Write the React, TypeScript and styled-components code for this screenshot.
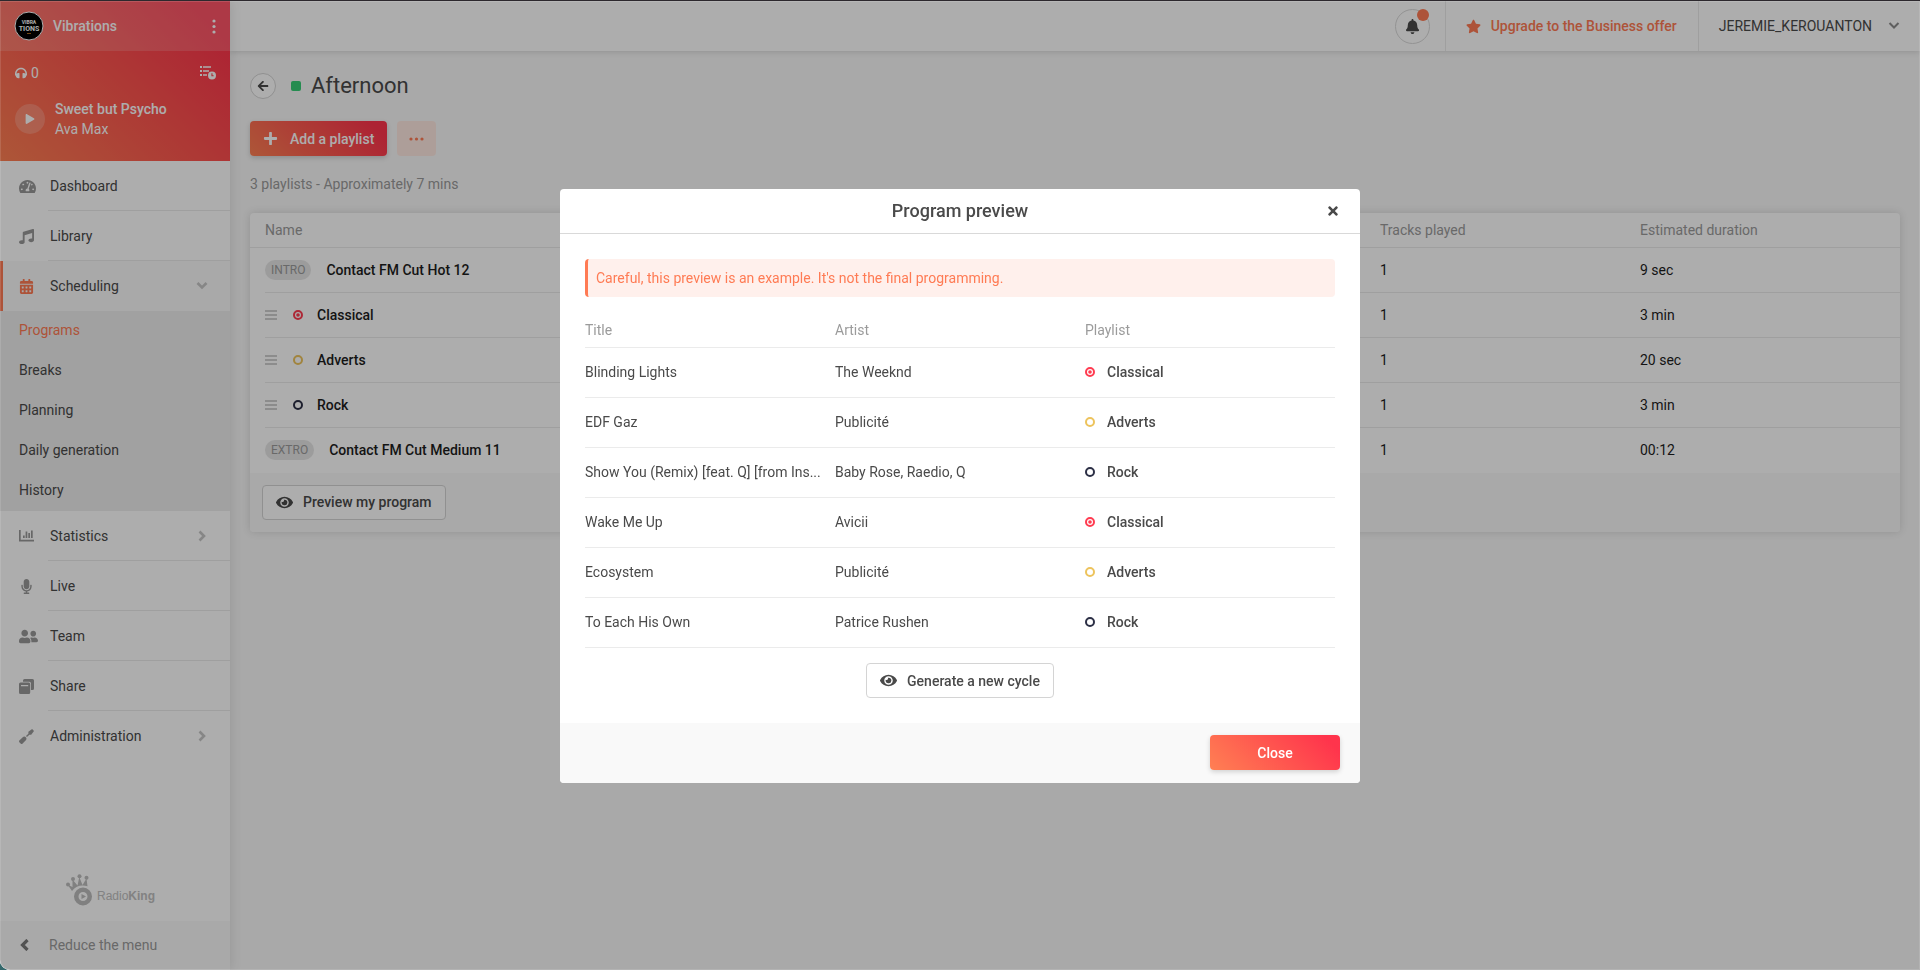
import React from "react";
import styled, { createGlobalStyle, css } from "styled-components";
import {
  FaArrowLeft,
  FaBell,
  FaCalendarAlt,
  FaEye,
  FaHeadphones,
  FaMicrophone,
  FaMusic,
  FaPlay,
  FaPlus,
  FaScrewdriver,
  FaStar,
  FaTachometerAlt,
  FaTimes,
  FaUserFriends,
} from "react-icons/fa";

const colors = {
  accent: "#ff7b54",
  text: "#4a4a4a",
  dark: "#1d1d1d",
  muted: "#9b9b9b",
  line: "#ebebeb",
  soft: "#f9f9f9",
  red: "#ff3b50",
  yellow: "#edc35c",
  navy: "#2c2f45",
};
const brandGradient = "linear-gradient(45deg, #ff8053 0%, #ff344c 90%)";

const GlobalStyle = createGlobalStyle`
  *, *::before, *::after { box-sizing: border-box; }
  body {
    margin: 0;
    background: #34686b;
    color: ${colors.text};
    font: 400 14px/20px Roboto, "Liberation Sans", sans-serif;
  }
  button { font: inherit; color: inherit; cursor: pointer; margin: 0; padding: 0; border: 0; background: none; }
  a { color: inherit; text-decoration: none; }
  h1, h2, p, ul { margin: 0; padding: 0; font-weight: 400; }
  ul { list-style: none; }
  svg { display: block; flex: none; }
  table { border-collapse: collapse; border-spacing: 0; table-layout: fixed; width: 100%; }
  th { font-weight: 400; text-align: left; color: ${colors.muted}; }
  td, th { padding: 0; }
`;

/* ---------- Page frame ---------- */

const Page = styled.div`
  display: flex;
  min-height: 100vh;
  border-top: 1px solid #2c282d;
  border-bottom-left-radius: 10px;
  overflow: hidden;
  background: ${colors.soft};
`;

/* ---------- Sidebar ---------- */

const Sidebar = styled.aside`
  display: flex;
  flex-direction: column;
  flex: none;
  width: 230px;
  background: #fff;
  box-shadow: 0 0 12px rgba(0, 0, 0, 0.12);
  z-index: 2;
`;

const Station = styled.div`
  background: ${brandGradient};
  color: #fff;
`;

const StationBar = styled.div`
  display: flex;
  align-items: center;
  gap: 9px;
  height: 50px;
  padding: 0 14px;
  background: rgba(255, 255, 255, 0.16);
  font-weight: 500;
`;

const StationName = styled.span`
  flex: 1;
`;

const DotsButton = styled.button`
  display: grid;
  place-items: center;
  width: 4px;
  height: 20px;
`;

const Player = styled.div`
  height: 110px;
  padding: 12px 14px 0 15px;
`;

const PlayerTop = styled.div`
  display: flex;
  align-items: center;
  justify-content: space-between;
`;

const Listeners = styled.span`
  display: flex;
  align-items: center;
  gap: 4px;
`;

const NowPlaying = styled.div`
  display: flex;
  align-items: center;
  gap: 10px;
  margin-top: 16px;
`;

const PlayButton = styled.button`
  display: grid;
  place-items: center;
  width: 30px;
  height: 30px;
  border-radius: 50%;
  background: rgba(255, 255, 255, 0.2);
`;

const TrackTitle = styled.p`
  font-weight: 500;
`;

const MenuRow = styled.a<{ $active?: boolean; $last?: boolean }>`
  display: flex;
  align-items: stretch;
  height: 50px;
  padding-left: ${(p) => (p.$active ? 16 : 19)}px;
  border-left: ${(p) => (p.$active ? `3px solid ${colors.accent}` : "0")};
  background: ${(p) => (p.$active ? colors.soft : "transparent")};
  --divider: ${(p) => (p.$active || p.$last ? "transparent" : colors.line)};
`;

const MenuIcon = styled.span<{ $active?: boolean }>`
  display: flex;
  align-items: center;
  width: 29px;
  color: ${(p) => (p.$active ? colors.accent : "#999")};
`;

const MenuLabel = styled.span`
  display: flex;
  flex: 1;
  align-items: center;
  justify-content: space-between;
  padding: 0 22px 0 2px;
  border-bottom: 1px solid var(--divider);

  svg {
    color: #c6c6c6;
  }
`;

const SubMenu = styled.ul`
  background: #ededed;
`;

const SubItem = styled.a<{ $active?: boolean }>`
  display: block;
  padding: 9px 19px 11px;
  color: ${(p) => (p.$active ? colors.accent : colors.text)};
`;

const Brand = styled.div`
  display: flex;
  align-items: flex-end;
  flex: 1;
  min-height: 64px;
  padding: 0 66px 15px;
`;

const BrandName = styled.span`
  margin-left: 4px;
  color: #c0c0c0;
  font: 400 12px/20px "Liberation Sans", sans-serif;

  b {
    font-weight: 700;
  }
`;

const ReduceButton = styled.button`
  display: flex;
  align-items: center;
  gap: 18px;
  height: 49px;
  padding-left: 19px;
  background: ${colors.soft};
  border-bottom: 1px solid #fff;
  color: ${colors.muted};

  svg {
    color: #7a7a7a;
  }
`;

/* ---------- Top bar ---------- */

const Main = styled.main`
  flex: 1;
  min-width: 0;
`;

const TopBar = styled.header`
  display: flex;
  justify-content: flex-end;
  height: 50px;
  background: #fff;
  box-shadow: 0 1px 6px rgba(0, 0, 0, 0.14);
`;

const TopSection = styled.div`
  display: flex;
  align-items: center;
  border-left: 1px solid ${colors.line};
`;

const BellWrap = styled.div`
  display: flex;
  align-items: center;
  padding-right: 15px;
`;

const BellButton = styled.button`
  position: relative;
  display: grid;
  place-items: center;
  width: 35px;
  height: 35px;
  border: 1px solid #d9d9d9;
  border-radius: 50%;

  &::after {
    content: "";
    position: absolute;
    top: -1px;
    right: 0;
    width: 12px;
    height: 12px;
    border-radius: 50%;
    background: ${colors.accent};
  }
`;

const UpgradeLink = styled.a`
  display: flex;
  align-items: center;
  gap: 10px;
  padding: 0 21px 0 20px;
  color: ${colors.accent};
  font-weight: 500;
`;

const UserButton = styled.button`
  display: flex;
  align-items: center;
  gap: 16px;
  padding: 0 20px;

  svg {
    color: #8c8c8c;
  }
`;

/* ---------- Content ---------- */

const Content = styled.div`
  padding: 22px 20px;
`;

const TitleRow = styled.div`
  display: flex;
  align-items: center;
  height: 26px;
`;

const BackButton = styled.button`
  display: grid;
  place-items: center;
  width: 26px;
  height: 26px;
  margin-right: 15px;
  border: 1px solid #d4d4d4;
  border-radius: 50%;
  background: #fff;
`;

const ColorChip = styled.span`
  width: 10px;
  height: 10px;
  margin-right: 10px;
  border-radius: 2px;
  background: #37cf77;
`;

const PageTitle = styled.h1`
  font-size: 22px;
  line-height: 26px;
`;

const Actions = styled.div`
  display: flex;
  gap: 10px;
  margin: 22px 0 18px;
`;

const Button = styled.button<{ $kind: "primary" | "outline" | "tint" }>`
  display: inline-flex;
  align-items: center;
  justify-content: center;
  gap: 10px;
  height: 35px;
  border-radius: 4px;
  font-weight: 500;
  padding: 0 12px;

  ${(p) =>
    p.$kind === "primary" &&
    css`
      min-width: 130px;
      padding: 0 13px;
      gap: 12px;
      background: ${brandGradient};
      color: #fff;
      box-shadow: 0 2px 5px rgba(0, 0, 0, 0.16);
    `}
  ${(p) =>
    p.$kind === "outline" &&
    css`
      padding: 0 13px;
      background: #fff;
      border: 1px solid #d4d4d4;
    `}
  ${(p) =>
    p.$kind === "tint" &&
    css`
      background: #ffe9e2;
      color: ${colors.accent};
    `}
`;

const Summary = styled.p`
  color: ${colors.muted};
`;

const Card = styled.section`
  margin-top: 19px;
  border-radius: 4px;
  overflow: hidden;
  background: #fff;
  box-shadow: 0 0 8px rgba(0, 0, 0, 0.14);
`;

const CardFooter = styled.div`
  padding: 12px;
  background: ${colors.soft};
`;

const ProgramTable = styled.table`
  color: ${colors.dark};

  th {
    height: 34px;
    border-bottom: 1px solid ${colors.line};
  }
  th:first-child,
  td:first-child {
    padding-left: 15px;
  }
  th:not(:first-child) {
    width: 260px;
  }
`;

const CellBox = styled.div<{ $last?: boolean }>`
  display: flex;
  align-items: center;
  height: 45px;
  border-bottom: 1px solid ${(p) => (p.$last ? "transparent" : colors.line)};
`;

const Tag = styled.span`
  height: 20px;
  margin-right: 15px;
  padding: 0 6px;
  border-radius: 10px;
  background: #e6e6e6;
  color: ${colors.muted};
  font-size: 12px;
`;

const Handle = styled.span`
  display: flex;
  flex-direction: column;
  justify-content: space-between;
  width: 12px;
  height: 10px;
  margin-right: 16px;
  border: solid #cfcfcf;
  border-width: 2px 0;

  &::before {
    content: "";
    height: 2px;
    margin: auto 0;
    background: #cfcfcf;
  }
`;

const Strong = styled.span`
  font-weight: 500;
`;

const PlaylistLabel = styled.span<{ $gap: number }>`
  display: flex;
  align-items: center;
  gap: ${(p) => p.$gap}px;
`;

/* ---------- Modal ---------- */

const Overlay = styled.div`
  position: fixed;
  inset: 1px 0 0;
  z-index: 10;
  display: flex;
  align-items: center;
  justify-content: center;
  padding-top: 1px;
  background: rgba(0, 0, 0, 0.32);
  border-bottom-left-radius: 10px;
  box-shadow: inset 0 0 0 1px rgba(255, 255, 255, 0.12);
`;

const Dialog = styled.div`
  width: 800px;
  max-width: 100%;
  border-radius: 4px;
  overflow: hidden;
  background: #fff;
`;

const DialogHeader = styled.div`
  display: grid;
  grid-template-columns: 30px 1fr 30px;
  align-items: center;
  height: 45px;
  padding: 0 12px;
  border-bottom: 1px solid #d9d9d9;
`;

const DialogTitle = styled.h2`
  grid-column: 2;
  font-size: 18px;
  font-weight: 500;
  text-align: center;
`;

const CloseIcon = styled.button`
  display: grid;
  place-items: center;
  height: 30px;
`;

const DialogBody = styled.div`
  display: flex;
  flex-direction: column;
  align-items: center;
  gap: 15px;
  padding: 25px;
`;

const Notice = styled.p`
  width: 100%;
  padding: 9px 8px;
  border-left: 3px solid ${colors.accent};
  border-radius: 4px;
  background: #fff0ec;
  color: ${colors.accent};
`;

const PreviewTable = styled.table`
  th,
  td {
    border-bottom: 1px solid ${colors.line};
  }
  th {
    height: 36px;
  }
  td {
    height: 50px;
    padding-bottom: 2px;
    white-space: nowrap;
  }
`;

const DialogFooter = styled.div`
  display: flex;
  justify-content: flex-end;
  padding: 12px 20px 13px;
  background: ${colors.soft};
`;

/* ---------- Drawings ---------- */

const StationLogo = () => (
  <svg width="30" height="30" viewBox="0 0 30 30" aria-hidden="true">
    <circle cx="15" cy="15" r="14" fill="#000" stroke="#fff" strokeWidth="1" />
    <g fill="#fff" textAnchor="middle" fontFamily="Roboto, sans-serif" fontWeight="700">
      <text x="15" y="13" fontSize="5">VIBRA</text>
      <text x="15" y="20" fontSize="7">TIONS</text>
    </g>
    <rect x="13" y="22" width="4" height="1" fill="#a86b1c" />
  </svg>
);

const Dots = ({ vertical }: { vertical?: boolean }) => (
  <svg
    width={vertical ? 4 : 15}
    height={vertical ? 15 : 4}
    viewBox={vertical ? "0 0 4 15" : "0 0 15 4"}
    fill="currentColor"
    aria-hidden="true"
  >
    {[2, 7.5, 13].map((at) => (
      <circle key={at} cx={vertical ? 2 : at} cy={vertical ? at : 2} r="1.6" />
    ))}
  </svg>
);

const chevronPoints = { down: "1.5,3 6,7.500 10.5,3", right: "3.500,1.500 8,6 3.500,10.500", left: "8.500,1 3.500,6 8.500,11" };

const Chevron = ({ to, weight = 2.6 }: { to: keyof typeof chevronPoints; weight?: number }) => (
  <svg width="12" height="12" viewBox="0 0 12 12" fill="none" aria-hidden="true">
    <polyline points={chevronPoints[to]} stroke="currentColor" strokeWidth={weight} />
  </svg>
);

const HistoryIcon = () => (
  <svg width="16" height="14" viewBox="0 0 16 14" fill="currentColor" aria-hidden="true">
    <path d="M0 0h2v2H0zM3 .2h8v1.600H3zM0 4h2v2H0zM3 4.200h6v1.600H3zM0 8h2v2H0zM3 8.200h4v1.600H3z" />
    <path
      fillRule="evenodd"
      d="M12 5.500a4 4 0 1 1 0 8a4 4 0 1 1 0-8zM11.400 7.300v3h2.200v-1.100h-1.100V7.300z"
    />
  </svg>
);

const ChartIcon = () => (
  <svg width="15" height="12" viewBox="0 0 15 12" fill="currentColor" aria-hidden="true">
    <path d="M0 0h1.700v9.800H15V11.500H0zM4 5.500h1.700v2.500H4zM6.600 1.500h1.700V8H6.600zM9.300 3h1.700v5H9.300zM12 .5h1.700V8H12z" />
  </svg>
);

const ShareIcon = () => (
  <svg width="15" height="15" viewBox="0 0 15 15" fill="currentColor" aria-hidden="true">
    <path d="M5.500 0H13.500a1.500 1.500 0 0 1 1.500 1.500V9.500a1.500 1.500 0 0 1-1.500 1.500H12V4.500A1.700 1.700 0 0 0 10.300 2.800H4V1.500A1.500 1.500 0 0 1 5.500 0z" />
    <path
      fillRule="evenodd"
      d="M1.500 3.600H9.700a1.500 1.500 0 0 1 1.500 1.500v8.400a1.500 1.500 0 0 1-1.500 1.500H1.500A1.500 1.500 0 0 1 0 13.500V5.100a1.500 1.500 0 0 1 1.500-1.500zM2 6v1.200h7.200V6z"
    />
  </svg>
);

const CrownDisc = () => (
  <svg width="27" height="32" viewBox="0 0 27 32" fill="#bdbdbd" aria-hidden="true">
    <path d="M6 17L1.500 10.500L6.500 13L6.500 5.500L11.500 11.500L13.300 3L16.500 11L20.500 4.500L21.500 12.200C15 10.500 10 12 6 17z" />
    <circle cx="2" cy="10.500" r="2" />
    <circle cx="7" cy="5" r="2" />
    <circle cx="13.500" cy="2.200" r="2" />
    <circle cx="20.500" cy="3.700" r="2" />
    <path
      fillRule="evenodd"
      d="M17 13.500a9 9 0 1 1 0 18a9 9 0 1 1 0-18zM17 18a4.500 4.500 0 1 0 0 9a4.500 4.500 0 1 0 0-9z"
    />
    <path d="M15.500 20l4.500 2.500l-4.500 2.500z" />
  </svg>
);

const Ring = ({ color, dot }: { color: string; dot?: boolean }) => (
  <svg width="10" height="10" viewBox="0 0 10 10" fill="none" aria-hidden="true">
    <circle cx="5" cy="5" r="4" stroke={color} strokeWidth="2" />
    {dot && <circle cx="5" cy="5" r="1.800" fill={color} />}
  </svg>
);

/* ---------- Data ---------- */

type Playlist = "Classical" | "Adverts" | "Rock";

const playlistColor: Record<Playlist, string> = {
  Classical: colors.red,
  Adverts: colors.yellow,
  Rock: colors.navy,
};

const program: { tag?: string; name: string; playlist?: Playlist; duration: string }[] = [
  { tag: "INTRO", name: "Contact FM Cut Hot 12", duration: "9 sec" },
  { name: "Classical", playlist: "Classical", duration: "3 min" },
  { name: "Adverts", playlist: "Adverts", duration: "20 sec" },
  { name: "Rock", playlist: "Rock", duration: "3 min" },
  { tag: "EXTRO", name: "Contact FM Cut Medium 11", duration: "00:12" },
];

const preview: [string, string, Playlist][] = [
  ["Blinding Lights", "The Weeknd", "Classical"],
  ["EDF Gaz", "Publicité", "Adverts"],
  ["Show You (Remix) [feat. Q] [from Ins...", "Baby Rose, Raedio, Q", "Rock"],
  ["Wake Me Up", "Avicii", "Classical"],
  ["Ecosystem", "Publicité", "Adverts"],
  ["To Each His Own", "Patrice Rushen", "Rock"],
];

const subItems = ["Programs", "Breaks", "Planning", "Daily generation", "History"];

const PlaylistName = ({ name, gap }: { name: Playlist; gap: number }) => (
  <PlaylistLabel $gap={gap}>
    <Ring color={playlistColor[name]} dot={name === "Classical"} />
    <Strong>{name}</Strong>
  </PlaylistLabel>
);

type MenuItemProps = {
  icon: React.ReactNode;
  label: string;
  arrow?: "down" | "right";
  active?: boolean;
  last?: boolean;
};

const MenuItem = ({ icon, label, arrow, active, last }: MenuItemProps) => (
  <MenuRow href="#" $active={active} $last={last}>
    <MenuIcon $active={active}>{icon}</MenuIcon>
    <MenuLabel>
      {label}
      {arrow && <Chevron to={arrow} />}
    </MenuLabel>
  </MenuRow>
);

export default function App() {
  return (
    <>
      <GlobalStyle />
      <Page>
        <Sidebar>
          <Station>
            <StationBar>
              <StationLogo />
              <StationName>Vibrations</StationName>
              <DotsButton aria-label="Station options">
                <Dots vertical />
              </DotsButton>
            </StationBar>
            <Player>
              <PlayerTop>
                <Listeners>
                  <FaHeadphones size={12} />0
                </Listeners>
                <button aria-label="Broadcast history">
                  <HistoryIcon />
                </button>
              </PlayerTop>
              <NowPlaying>
                <PlayButton aria-label="Play">
                  <FaPlay size={10} />
                </PlayButton>
                <div>
                  <TrackTitle>Sweet but Psycho</TrackTitle>
                  <p>Ava Max</p>
                </div>
              </NowPlaying>
            </Player>
          </Station>
          <nav>
            <MenuItem icon={<FaTachometerAlt size={17} />} label="Dashboard" />
            <MenuItem icon={<FaMusic size={15} />} label="Library" />
            <MenuItem icon={<FaCalendarAlt size={15} />} label="Scheduling" arrow="down" active />
            <SubMenu>
              {subItems.map((item, i) => (
                <li key={item}>
                  <SubItem href="#" $active={i === 0}>
                    {item}
                  </SubItem>
                </li>
              ))}
            </SubMenu>
            <MenuItem icon={<ChartIcon />} label="Statistics" arrow="right" />
            <MenuItem icon={<FaMicrophone size={15} />} label="Live" />
            <MenuItem icon={<FaUserFriends size={19} />} label="Team" />
            <MenuItem icon={<ShareIcon />} label="Share" />
            <MenuItem icon={<FaScrewdriver size={15} />} label="Administration" arrow="right" last />
          </nav>
          <Brand>
            <CrownDisc />
            <BrandName>
              Radio<b>King</b>
            </BrandName>
          </Brand>
          <ReduceButton>
            <Chevron to="left" weight={3.2} />
            Reduce the menu
          </ReduceButton>
        </Sidebar>

        <Main>
          <TopBar>
            <BellWrap>
              <BellButton aria-label="Notifications">
                <FaBell size={15} />
              </BellButton>
            </BellWrap>
            <TopSection>
              <UpgradeLink href="#">
                <FaStar size={15} />
                Upgrade to the Business offer
              </UpgradeLink>
            </TopSection>
            <TopSection>
              <UserButton>
                JEREMIE_KEROUANTON
                <Chevron to="down" weight={2} />
              </UserButton>
            </TopSection>
          </TopBar>

          <Content>
            <TitleRow>
              <BackButton aria-label="Back">
                <FaArrowLeft size={12} />
              </BackButton>
              <ColorChip />
              <PageTitle>Afternoon</PageTitle>
            </TitleRow>
            <Actions>
              <Button $kind="primary">
                <FaPlus size={15} />
                Add a playlist
              </Button>
              <Button $kind="tint" aria-label="More actions">
                <Dots />
              </Button>
            </Actions>
            <Summary>3 playlists - Approximately 7 mins</Summary>
            <Card>
              <ProgramTable>
                <thead>
                  <tr>
                    <th>Name</th>
                    <th>Tracks played</th>
                    <th>Estimated duration</th>
                  </tr>
                </thead>
                <tbody>
                  {program.map((row, i) => {
                    const last = i === program.length - 1;
                    return (
                      <tr key={row.name}>
                        <td>
                          <CellBox $last={last}>
                            {row.tag ? <Tag>{row.tag}</Tag> : <Handle />}
                            {row.playlist ? (
                              <PlaylistName name={row.playlist} gap={14} />
                            ) : (
                              <Strong>{row.name}</Strong>
                            )}
                          </CellBox>
                        </td>
                        <td>
                          <CellBox $last={last}>1</CellBox>
                        </td>
                        <td>
                          <CellBox $last={last}>{row.duration}</CellBox>
                        </td>
                      </tr>
                    );
                  })}
                </tbody>
              </ProgramTable>
              <CardFooter>
                <Button $kind="outline">
                  <FaEye size={17} />
                  Preview my program
                </Button>
              </CardFooter>
            </Card>
          </Content>
        </Main>
      </Page>

      <Overlay>
        <Dialog role="dialog" aria-modal="true" aria-labelledby="preview-title">
          <DialogHeader>
            <DialogTitle id="preview-title">Program preview</DialogTitle>
            <CloseIcon aria-label="Close preview">
              <FaTimes size={14} />
            </CloseIcon>
          </DialogHeader>
          <DialogBody>
            <Notice>Careful, this preview is an example. It's not the final programming.</Notice>
            <PreviewTable>
              <thead>
                <tr>
                  <th>Title</th>
                  <th>Artist</th>
                  <th>Playlist</th>
                </tr>
              </thead>
              <tbody>
                {preview.map(([title, artist, playlist]) => (
                  <tr key={title}>
                    <td>{title}</td>
                    <td>{artist}</td>
                    <td>
                      <PlaylistName name={playlist} gap={12} />
                    </td>
                  </tr>
                ))}
              </tbody>
            </PreviewTable>
            <Button $kind="outline">
              <FaEye size={17} />
              Generate a new cycle
            </Button>
          </DialogBody>
          <DialogFooter>
            <Button $kind="primary">Close</Button>
          </DialogFooter>
        </Dialog>
      </Overlay>
    </>
  );
}
